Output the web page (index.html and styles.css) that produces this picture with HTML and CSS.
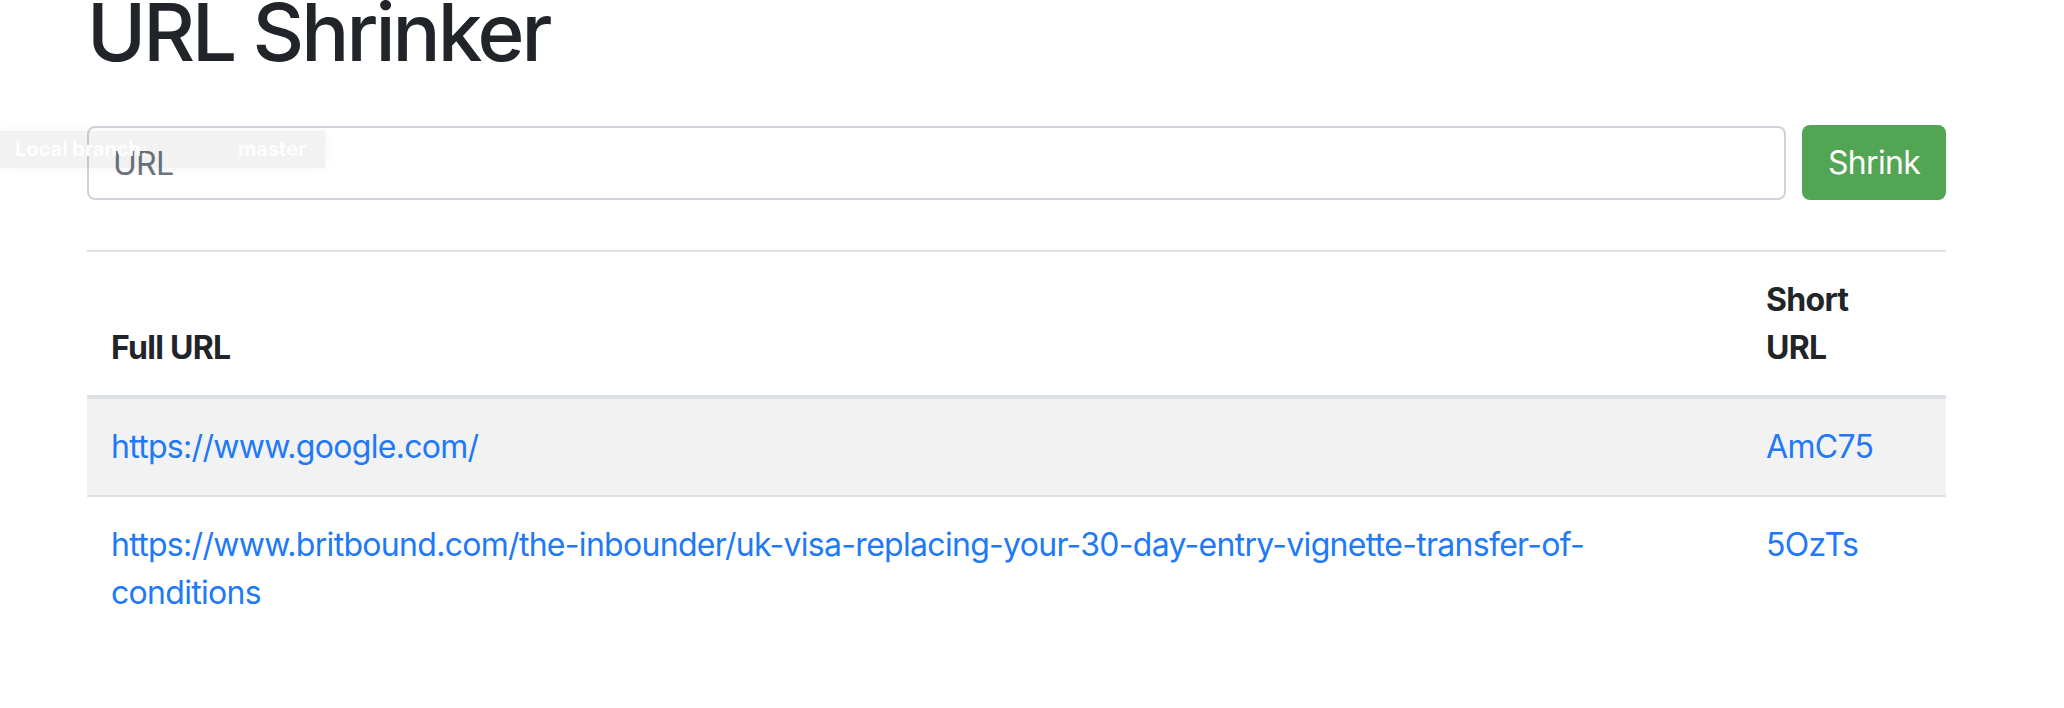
FILE: index.html
```html
<!DOCTYPE html>
<html lang="en">
<head>
<meta charset="utf-8">
<title>URL Shrinker</title>
<link rel="stylesheet" href="styles.css">
</head>
<body>
<div class="container">
  <h1 class="title">URL Shrinker</h1>
  <form class="shrink-form">
    <input class="url-input" type="text" placeholder="URL">
    <button class="btn-shrink" type="button">Shrink</button>
  </form>
  <table class="url-table">
    <thead>
      <tr>
        <th class="col-full">Full URL</th>
        <th class="col-short"><span class="th-wrap">Short URL</span></th>
      </tr>
    </thead>
    <tbody>
      <tr class="striped">
        <td><a class="link" href="#">https://www.google.com/</a></td>
        <td><a class="link" href="#">AmC75</a></td>
      </tr>
      <tr>
        <td><a class="link" href="#">https://www.britbound.com/the-inbounder/uk-visa-replacing-your-30-day-entry-vignette-transfer-of-conditions</a></td>
        <td><a class="link" href="#">5OzTs</a></td>
      </tr>
    </tbody>
  </table>
</div>
<div class="branch-badge">
  <span class="branch-label">Local branch:</span>
  <span class="branch-name">master</span>
</div>
</body>
</html>
```

FILE: styles.css
```css
html, body {
  margin: 0;
  padding: 0;
  background: #ffffff;
}

body {
  font-family: Inter, "Noto Sans", "Liberation Sans", sans-serif;
  color: #212529;
  font-size: 32px;
  line-height: 48px;
  letter-spacing: -0.7px;
  overflow: hidden;
}

.container {
  margin-left: 87px;
  width: 1859px;
}

.title {
  margin: -16px 0 0 0;
  font-size: 80px;
  line-height: 96px;
  font-weight: 500;
  letter-spacing: -3px;
  color: #212529;
}

.shrink-form {
  display: flex;
  gap: 16px;
  margin: 46px 0 0 0;
  align-items: stretch;
}

.url-input {
  flex: 1;
  height: 74px;
  box-sizing: border-box;
  border: 2px solid #ced4da;
  border-radius: 8px;
  padding: 0 24px;
  font-family: inherit;
  font-size: 32px;
  letter-spacing: -0.7px;
  color: #495057;
  outline: none;
  background: #fff;
}

.url-input::placeholder {
  color: #6c757d;
}

.btn-shrink {
  width: 144px;
  height: 75px;
  box-sizing: border-box;
  margin-top: -1px;
  border: none;
  border-radius: 8px;
  background: #52a552;
  color: #ffffff;
  font-family: inherit;
  font-size: 32px;
  letter-spacing: -0.7px;
  padding: 0;
}

.url-table {
  width: 100%;
  border-collapse: collapse;
  margin-top: 50px;
}

.url-table th,
.url-table td {
  border-top: 2px solid #dee2e6;
  padding: 24px;
  text-align: left;
  vertical-align: top;
}

.url-table th {
  font-weight: 700;
  vertical-align: bottom;
  border-bottom: 4px solid #dee2e6;
  padding-bottom: 23px;
}

.col-short {
  width: 156px;
}

.th-wrap {
  display: block;
  max-width: 120px;
}

.striped td {
  background: #f2f2f2;
}

.link {
  color: #2179f6;
  text-decoration: none;
}

.branch-badge {
  position: absolute;
  left: 0;
  top: 131px;
  width: 325px;
  height: 37px;
  display: flex;
  align-items: center;
  padding-left: 15px;
  box-sizing: border-box;
  background: rgba(0, 0, 0, 0.05);
  box-shadow: 0 0 12px rgba(0, 0, 0, 0.04);
  font-size: 20px;
  line-height: 37px;
  font-weight: 700;
  letter-spacing: 0;
  color: rgba(255, 255, 255, 0.95);
}

.branch-label {
  width: 223px;
}
```
